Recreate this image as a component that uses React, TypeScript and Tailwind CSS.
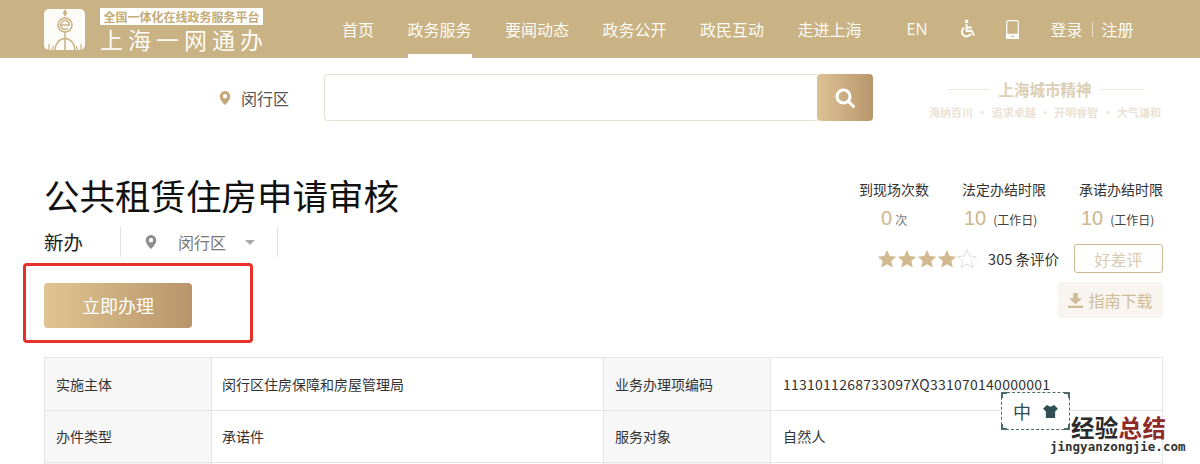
const navItems = ['首页', '政务服务', '要闻动态', '政务公开', '政民互动', '走进上海'];

const rows = [
  { h: 'h-[53px]', a: '实施主体', b: '闵行区住房保障和房屋管理局', c: '业务办理项编码', d: '1131011268733097XQ331070140000001' },
  { h: 'h-[52px]', a: '办件类型', b: '承诺件', c: '服务对象', d: '自然人' },
  { h: 'h-[52px]', a: '', b: '', c: '', d: '' },
];

const spirit = ['海纳百川', '·', '追求卓越', '·', '开明睿智', '·', '大气谦和'];

const Pin = ({ className }: { className: string }) => (
  <svg viewBox="0 0 12 16" className={className} fill="currentColor">
    <path fillRule="evenodd" d="M6 0a6 6 0 0 1 6 6c0 3.6-3.6 7.6-6 10C3.6 13.6 0 9.600 0 6a6 6 0 0 1 6-6Zm0 3.500a2.500 2.500 0 1 0 0 5 2.500 2.500 0 0 0 0-5Z" />
  </svg>
);

const Star = ({ className }: { className: string }) => (
  <svg viewBox="0 0 20 20" className={className}>
    <path d="M10 1l2.700 6.100 6.600.6-5 4.400 1.500 6.500L10 15.200l-5.800 3.400 1.500-6.500-5-4.400 6.600-.6z" />
  </svg>
);

const Logo = () => (
  <div className="w-[41px] h-[41px] rounded-[5px] bg-[#fdfcf9] shrink-0">
    <svg viewBox="0 0 41 41" className="w-[41px] h-[41px]" fill="none" stroke="#c9b283" strokeWidth="1.500">
      <path d="M21 0l-2.200 4 2.200 4 2.200-4z" fill="#c9b283" stroke="none" />
      <circle cx="21" cy="16" r="7" />
      <path d="M15.500 16h10.500M25.500 16a4.500 4.500 0 1 0-1.500 3.300" />
      <path d="M21 23v18" />
      <path d="M11 41c0-6 4.500-11.500 10-11.500S31 35 31 41" />
      <path d="M5 41v-6M37 41v-6M8 41l2-4M34 41l-2-4" strokeWidth="1.200" />
    </svg>
  </div>
);

const Stat = ({ title, value, unit, big, offset }: { title: string; value: string; unit: string; big?: boolean; offset: string }) => (
  <div className="flex flex-col">
    <div className="text-[14px] leading-[20px] text-[#333] whitespace-nowrap">{title}</div>
    <div className={`flex items-baseline mt-[7px] leading-[24px] whitespace-nowrap ${offset}`}>
      <span className="text-[20px] text-[#cdb78c] font-['Liberation_Sans',sans-serif]">{value}</span>
      <span className={big ? 'ml-[7px] text-[12px] text-[#444]' : 'ml-[3px] text-[12px] text-[#777]'}>{unit}</span>
    </div>
  </div>
);

export default function App() {
  return (
    <div className="relative w-[1200px] h-[464px] overflow-hidden bg-white text-[#333] font-['Noto_Sans_CJK_SC','Liberation_Sans',sans-serif]">
      <header className="h-[58px] bg-[#c9b283] flex items-center pl-[44px] text-[#fdfbf6]">
        <Logo />
        <div className="ml-[15px] w-[163px] shrink-0 pt-[2px]">
          <div className="h-[17px] bg-white text-[#c4ab78] font-bold text-[12px] leading-[17px] text-center whitespace-nowrap">全国一体化在线政务服务平台</div>
          <div className="text-[23px] leading-[26px] mt-[1px] tracking-[5px] whitespace-nowrap">上海一网通办</div>
        </div>
        <nav className="ml-[79px] flex gap-[33.500px] self-stretch">
          {navItems.map((item) => (
            <a key={item} className={`flex items-center text-[16px] whitespace-nowrap ${item === '政务服务' ? 'border-b-[4px] border-white pt-[4px]' : ''}`}>
              {item}
            </a>
          ))}
        </nav>
        <span className="ml-[45px] text-[16px] font-['Open_Sans',sans-serif]">EN</span>
        <svg viewBox="0 0 18 20" className="ml-[31px] w-[17px] h-[20px]" fill="none" stroke="currentColor" strokeWidth="2.200">
          <circle cx="8" cy="2" r="2" fill="currentColor" stroke="none" />
          <path d="M8 5v7h5.500l2.500 5" />
          <path d="M8 8.500h5.500" />
          <path d="M5.500 8.500a5 5 0 1 0 7 6.500" />
        </svg>
        <svg viewBox="0 0 13 19" className="ml-[30px] w-[13px] h-[19px]" fill="none" stroke="currentColor" strokeWidth="1.300">
          <rect x="0.700" y="0.700" width="11.600" height="17.600" rx="1.500" />
          <path d="M0.700 14.500h11.600v3.800H0.700z" fill="currentColor" />
          <path d="M5 16.400h3" stroke="#c9b283" strokeWidth="1" />
        </svg>
        <div className="ml-[32px] flex items-center text-[16px] whitespace-nowrap">
          <span>登录</span>
          <span className="mx-[9px] h-[15px] w-px bg-[#e9dfc9]" />
          <span>注册</span>
        </div>
      </header>

      <div className="h-[47px] mt-[16px] flex">
        <div className="ml-[219px] flex items-center">
          <Pin className="w-[12px] h-[14px] text-[#c4a878]" />
          <span className="ml-[10px] text-[16px] text-[#555] whitespace-nowrap">闵行区</span>
        </div>
        <div className="ml-[35px] w-[493px] border border-r-0 border-[#e6e1d6] rounded-l-[4px]" />
        <button className="w-[56px] rounded-[4px] flex items-center justify-center bg-gradient-to-r from-[#dcc294] to-[#b9976c]">
          <svg viewBox="0 0 20 20" className="w-[20px] h-[20px]" fill="none" stroke="white" strokeWidth="3">
            <circle cx="8.500" cy="8.500" r="6.500" />
            <path d="M13.500 13.500l5 5" strokeLinecap="round" />
          </svg>
        </button>
        <div className="ml-[56px] w-[232px] flex flex-col items-center pt-[4px]">
          <div className="flex items-center gap-[9px]">
            <span className="w-[42px] h-px bg-[#eee8db]" />
            <span className="text-[15.500px] leading-[22px] font-bold text-[#dccfb4] whitespace-nowrap">上海城市精神</span>
            <span className="w-[42px] h-px bg-[#eee8db]" />
          </div>
          <div className="mt-[3px] w-[232px] flex justify-between text-[11px] leading-[18px] font-bold text-[#eae3d4] whitespace-nowrap">
            {spirit.map((part, idx) => (
              <span key={idx}>{part}</span>
            ))}
          </div>
        </div>
      </div>

      <main className="pl-[44px] pr-[37px] flex justify-between h-[236px]">
        <div>
          <h1 className="mt-[48px] text-[35.500px] leading-[52px] text-[#111] whitespace-nowrap">公共租赁住房申请审核</h1>
          <div className="mt-[6px] flex items-center h-[30px]">
            <span className="w-[76px] text-[19.500px] text-[#222]">新办</span>
            <div className="w-[158px] h-[30px] border-x border-[#e3e3e3] flex items-center pl-[24px]">
              <Pin className="w-[12px] h-[14px] text-[#8d8d8d]" />
              <span className="ml-[21px] text-[16px] text-[#777] whitespace-nowrap">闵行区</span>
              <span className="ml-[19px] w-0 h-0 border-x-[5px] border-x-transparent border-t-[5px] border-t-[#aaa]" />
            </div>
          </div>
          <button className="mt-[26px] w-[148px] h-[45px] rounded-[4px] bg-gradient-to-r from-[#dfc591] to-[#b8956a] text-white text-[18px]">立即办理</button>
        </div>

        <div className="w-[304px] pt-[58px] flex flex-col items-end">
          <div className="flex gap-[33px]">
            <Stat title="到现场次数" value="0" unit="次" offset="ml-[22px]" />
            <Stat title="法定办结时限" value="10" unit="(工作日)" big offset="ml-[2px]" />
            <Stat title="承诺办结时限" value="10" unit="(工作日)" big offset="ml-[2px]" />
          </div>
          <div className="mt-[12px] flex items-center">
            <div className="flex">
              <Star className="w-[20px] h-[20px] fill-[#d3b98f]" />
              <Star className="w-[20px] h-[20px] fill-[#d3b98f]" />
              <Star className="w-[20px] h-[20px] fill-[#d3b98f]" />
              <Star className="w-[20px] h-[20px] fill-[#d3b98f]" />
              <Star className="w-[20px] h-[20px] fill-none stroke-[#dedede]" />
            </div>
            <span className="ml-[11px] text-[14.500px] text-[#333] whitespace-nowrap">305 条评价</span>
            <button className="ml-[15px] w-[89px] h-[29px] border border-[#cdb994] rounded-[3px] text-[16px] text-[#d8cbae]">好差评</button>
          </div>
          <button className="mt-[9px] w-[105px] h-[36px] rounded-[4px] bg-[#f8f5f0] flex items-center justify-center gap-[5px] text-[16px] text-[#cfbc96]">
            <svg viewBox="0 0 16 16" className="w-[15px] h-[15px]" fill="currentColor">
              <path d="M5.500 0h5v5.500H15L8 12 1 5.500h4.500zM0 13.500h16V16H0z" />
            </svg>
            指南下载
          </button>
        </div>
      </main>

      <div className="ml-[44px] w-[1119px] grid grid-cols-[168px_391px_168px_392px] border-t border-r border-[#e4e4e4] text-[14px] text-[#333]">
        {rows.map((row, idx) => (
          <div key={idx} className="contents">
            <div className={`${row.h} px-[11px] flex items-center bg-[#f7f7f7] border-x border-b border-[#e4e4e4]`}>{row.a}</div>
            <div className={`${row.h} px-[10px] flex items-center border-b border-[#e4e4e4]`}>{row.b}</div>
            <div className={`${row.h} px-[11px] flex items-center bg-[#f7f7f7] border-x border-b border-[#e4e4e4] whitespace-nowrap`}>{row.c}</div>
            <div className={`${row.h} px-[12px] flex items-center border-b border-[#e4e4e4] tracking-[0.250px]`}>{row.d}</div>
          </div>
        ))}
      </div>

      {/* annotation drawn on top of the screenshot */}
      <div className="absolute left-[23px] top-[263px] w-[230px] h-[80px] border-[3px] border-[#e8302a] rounded-[4px]" />

      {/* input method badge + site watermark */}
      <div className="absolute left-[1001px] top-[392px] w-[69px] h-[38px] rounded-[6px] border border-dashed border-[#4d6a6a] bg-white flex items-center justify-center gap-[12px] text-[#2f4f55]">
        <span className="absolute -left-px -top-px w-[6px] h-[6px] border-l-2 border-t-2 border-[#4d6a6a]" />
        <span className="absolute -right-px -top-px w-[6px] h-[6px] border-r-2 border-t-2 border-[#4d6a6a]" />
        <span className="absolute -left-px -bottom-px w-[6px] h-[6px] border-l-2 border-b-2 border-[#4d6a6a]" />
        <span className="absolute -right-px -bottom-px w-[6px] h-[6px] border-r-2 border-b-2 border-[#4d6a6a]" />
        <span className="text-[18px] leading-none">中</span>
        <svg viewBox="0 0 16 14" className="w-[15px] h-[13px]" fill="currentColor">
          <path d="M4 0l4 2 4-2 4 4-3 3v7H3V7L0 4z" />
        </svg>
      </div>
      <div className="absolute left-[1071px] top-[415px] text-[23.500px] leading-[24px] font-bold tracking-[0.300px] whitespace-nowrap">
        <span className="text-[#2b2b2b]">经验</span>
        <span className="text-[#8f2a2a]">总结</span>
      </div>
      <div className="absolute left-[1050px] top-[440px] text-[12.500px] leading-[14px] font-bold text-[#333] font-['DejaVu_Sans_Mono',monospace] whitespace-nowrap">jingyanzongjie.com</div>
    </div>
  );
}
